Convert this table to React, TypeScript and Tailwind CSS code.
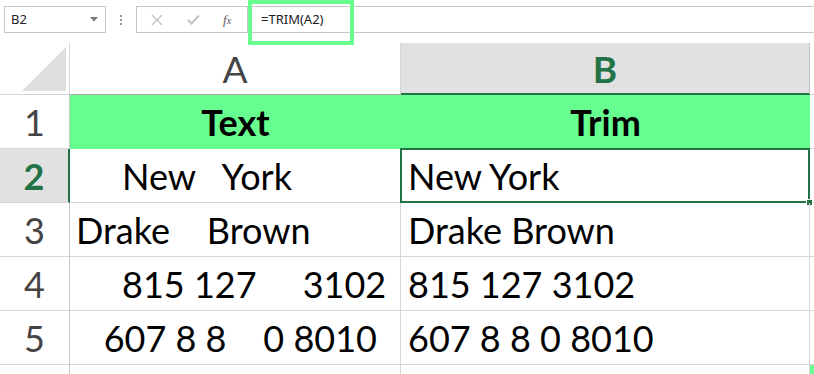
import React from 'react';

const GREEN = '#217346';

const cellFont = { fontFamily: 'Lato, "Noto Sans", sans-serif' };

const rows = [
    { n: 2, a: '     New   York', b: 'New York' },
    { n: 3, a: 'Drake    Brown', b: 'Drake Brown' },
    { n: 4, a: '     815 127     3102', b: '815 127 3102' },
    { n: 5, a: '   607 8 8    0 8010', b: '607 8 8 0 8010' },
];

const FormulaBar = () => {
    return (
        <div className="relative h-[43px] flex items-start pt-[6px]" style={{ fontFamily: '"Noto Sans", sans-serif' }}>
            <div className="ml-[4px] w-[102px] h-[27px] border border-[#c6c6c6] flex items-center justify-between pl-[6px] pr-[7px]">
                <span className="text-[13px] text-[#222]">B2</span>
                <svg width="8" height="5" viewBox="0 0 8 5">
                    <polygon points="0,0 8,0 4,4.5" fill="#7a7a7a" />
                </svg>
            </div>
            <div className="w-[30px] h-[27px] flex flex-col items-center justify-center gap-[2px]">
                <span className="w-[2px] h-[2px] bg-[#9a9a9a]" />
                <span className="w-[2px] h-[2px] bg-[#9a9a9a]" />
                <span className="w-[2px] h-[2px] bg-[#9a9a9a]" />
            </div>
            <div className="w-[112px] h-[27px] border border-[#c6c6c6] flex items-center">
                <svg className="ml-[14px]" width="12" height="12" viewBox="0 0 12 12">
                    <path d="M1 1 L11 11 M11 1 L1 11" stroke="#c2c2c2" strokeWidth="1.4" fill="none" />
                </svg>
                <svg className="ml-[24px]" width="13" height="11" viewBox="0 0 13 11">
                    <path d="M1 6 L4.5 9.5 L12 1.5" stroke="#c2c2c2" strokeWidth="2" fill="none" />
                </svg>
                <span className="ml-[23px] text-[13px] italic text-[#555]" style={{ fontFamily: '"Liberation Serif", serif' }}>
                    f<span className="text-[10px]">x</span>
                </span>
            </div>
            <div className="flex-1 h-[27px] border-t border-b border-[#c6c6c6] flex items-center pl-[13px]">
                <span className="text-[13px] text-[#222]">=TRIM(A2)</span>
            </div>
            {/* highlight drawn around the formula */}
            <div className="absolute left-[248px] top-0 w-[106px] h-[45px] border-4 border-[#69ff8f]" />
        </div>
    );
};

const App = () => {
    return (
        <div className="w-[814px] h-[374px] bg-white overflow-hidden" style={cellFont}>
            <FormulaBar />
            <div className="grid grid-cols-[70px_331px_409px_1fr] grid-rows-[52px_54px_54px_54px_54px_54px_20px]">
                {/* column headers */}
                <div className="border-r border-b border-[#d6d6d6] relative">
                    <svg className="absolute left-0 top-0" width="69" height="51" viewBox="0 0 69 51">
                        <polygon points="22,48 66,4 66,48" fill="#dfdfdf" />
                    </svg>
                </div>
                <div className="border-r border-b border-r-[#d6d6d6] border-b-[#ababab] flex items-center justify-center text-[37px] text-[#444] leading-none">
                    A
                </div>
                <div className="bg-[#e1e1e1] border-r border-[#c0c0c0] border-b-2 border-b-[#217346] flex items-center justify-center text-[37px] font-bold leading-none" style={{ color: GREEN }}>
                    B
                </div>
                <div className="border-b border-[#d6d6d6]" />

                {/* row 1 */}
                <div className="border-r border-b border-r-[#c8c8c8] border-b-[#d6d6d6] flex items-center justify-center text-[36px] text-[#444] leading-none">
                    1
                </div>
                <div className="bg-[#66ff8f] flex items-center justify-center text-[36px] font-bold text-black leading-none">
                    Text
                </div>
                <div className="bg-[#66ff8f] flex items-center justify-center text-[36px] font-bold text-black leading-none">
                    Trim
                </div>
                <div className="border-b border-[#d6d6d6]" />

                {rows.map((r) => {
                    const selected = r.n === 2;
                    return (
                        <React.Fragment key={r.n}>
                            <div
                                className={
                                    selected
                                        ? 'bg-[#e1e1e1] border-r-2 border-r-[#217346] border-b border-b-[#d6d6d6] flex items-center justify-center text-[36px] font-bold leading-none text-[#217346]'
                                        : 'border-r border-b border-r-[#c8c8c8] border-b-[#d6d6d6] flex items-center justify-center text-[36px] text-[#444] leading-none'
                                }
                            >
                                {r.n}
                            </div>
                            <div className="border-r border-b border-[#d6d6d6] flex items-center pl-[6px] text-[36px] text-black leading-none whitespace-pre">
                                {r.a}
                            </div>
                            <div className="relative border-r border-b border-[#d6d6d6] flex items-center pl-[7px] text-[36px] text-black leading-none whitespace-pre">
                                {r.b}
                                {selected && (
                                    <>
                                        <div className="absolute -left-[1px] -top-[1px] right-[-1px] bottom-[-1px] border-2 border-[#217346]" />
                                        <div className="absolute right-[-4px] bottom-[-4px] w-[7px] h-[7px] bg-[#217346] border border-white" />
                                    </>
                                )}
                            </div>
                            <div className="border-b border-[#d6d6d6]" />
                        </React.Fragment>
                    );
                })}

                {/* row 6, partly visible */}
                <div className="border-r border-[#c8c8c8]" />
                <div className="border-r border-[#d6d6d6]" />
                <div className="border-r border-[#d6d6d6]" />
                <div className="bg-[#66ff8f]" />
            </div>
        </div>
    );
};

export default App;
